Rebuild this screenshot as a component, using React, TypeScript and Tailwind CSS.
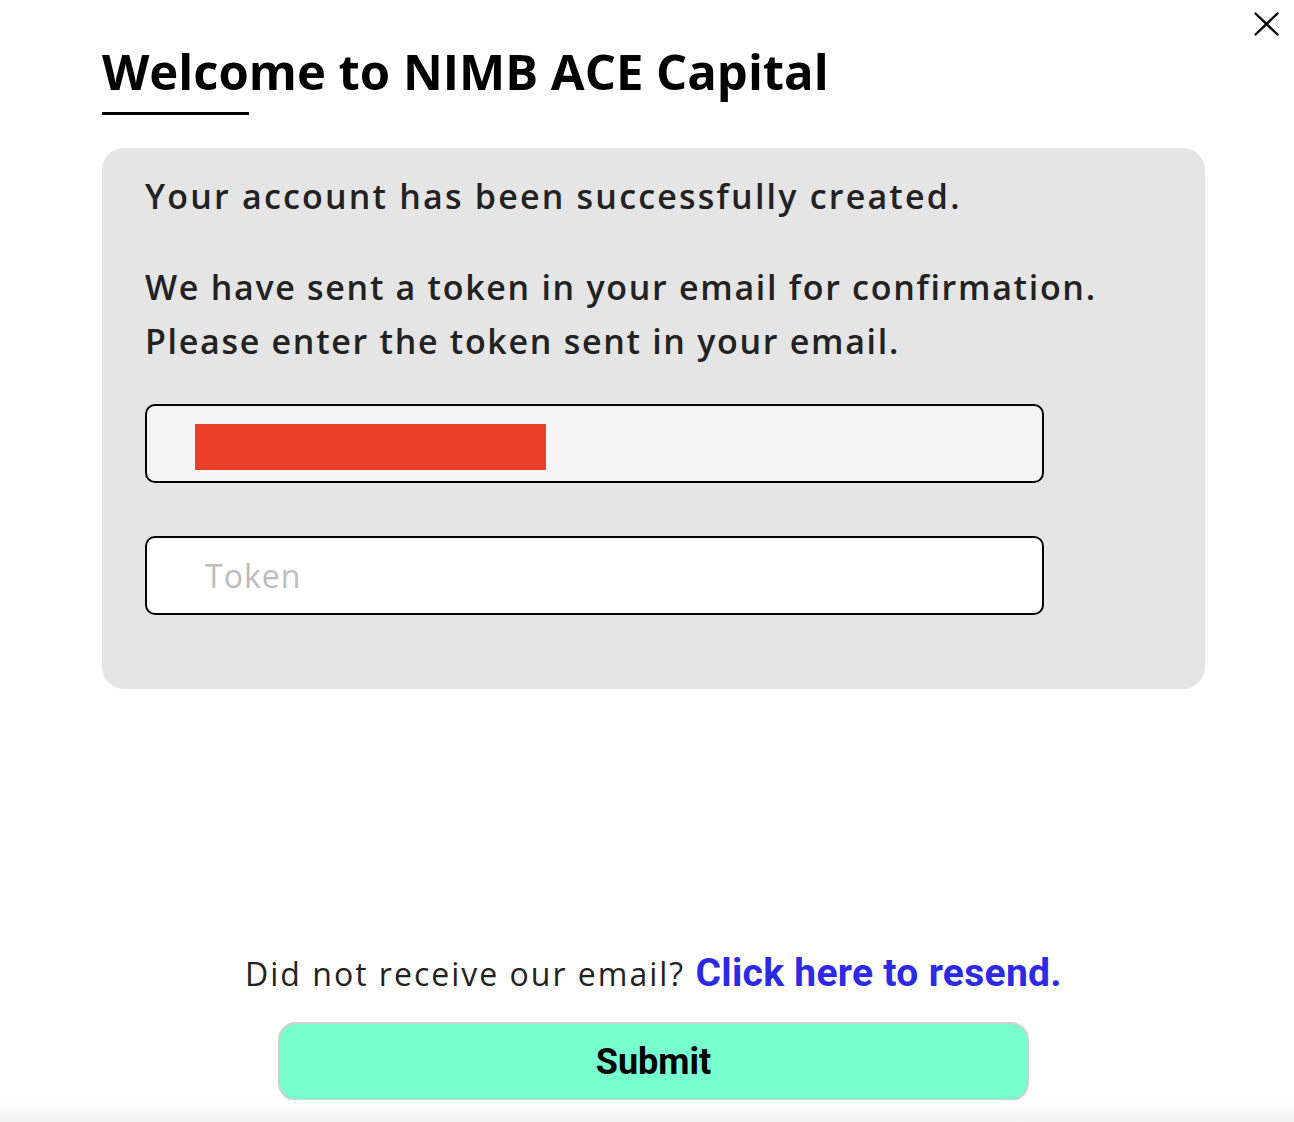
export default function App() {
  return (
    <div className="relative min-h-[1122px] w-full bg-white font-['Open_Sans',sans-serif] text-[#222]">
      {/* close */}
      <button className="absolute right-[15px] top-[12px] text-black">
        <svg width="25" height="24" viewBox="0 0 25 24" fill="none" stroke="currentColor" strokeWidth="2.4" strokeLinecap="round">
          <path d="M1.5 1.5L23.5 22.5M23.5 1.5L1.5 22.5" />
        </svg>
      </button>

      <div className="flex flex-col pl-[102px] pr-[89px] pt-[40px]">
        <h1 className="text-[49px] font-bold leading-[62px] text-black">
          Welcome to NIMB ACE Capital
        </h1>
        <div className="mt-[10px] h-[3px] w-[147px] bg-black" />

        <div className="mt-[33px] flex h-[541px] flex-col rounded-[22px] bg-[#e5e5e5] px-[43px] pt-[24px]">
          <p className="text-[34px] font-semibold leading-[48px] tracking-[2.2px]">
            Your account has been successfully created.
          </p>
          <p className="mt-[40px] text-[34px] font-semibold leading-[54px] tracking-[1.7px]">
            We have sent a token in your email for confirmation.
            <br />
            Please enter the token sent in your email.
          </p>

          <div className="mt-[36px] flex h-[79px] w-[899px] items-center rounded-[10px] border-2 border-black bg-[#f4f4f4] pl-[48px]">
            <div className="mt-[7px] h-[46px] w-[351px] bg-[#ec3f27]" />
          </div>

          <div className="mt-[53px] flex h-[79px] w-[899px] items-center rounded-[10px] border-2 border-black bg-white pl-[58px]">
            <input
              placeholder="Token"
              className="w-full bg-transparent text-[32px] tracking-[1px] outline-none placeholder:text-[#bdbdbd]"
            />
          </div>
        </div>

        <div className="mt-[264px] flex flex-col items-center">
          <p className="text-[32px] leading-[40px] tracking-[2px]">
            Did not receive our email?{" "}
            <a className="font-['Roboto',sans-serif] text-[39px] font-bold tracking-[0.3px] text-[#2d2ae6]">
              Click here to resend.
            </a>
          </p>
          <button className="mt-[28px] h-[79px] w-[751px] rounded-[18px] border-2 border-[#d0d0d0] bg-[#78fdcf] font-['Roboto',sans-serif] text-[36px] font-bold text-black">
            Submit
          </button>
        </div>
      </div>
      <div className="absolute bottom-0 left-0 h-[22px] w-full bg-gradient-to-b from-white to-[#f2f2f2]" />
    </div>
  );
}
